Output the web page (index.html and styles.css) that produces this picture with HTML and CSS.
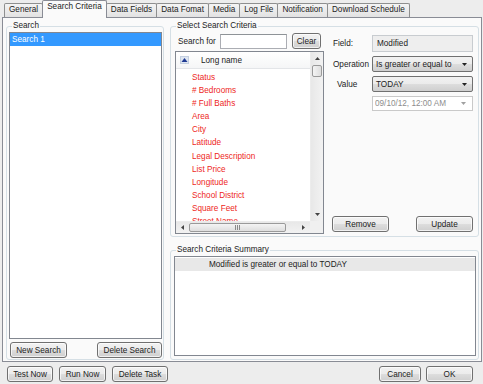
FILE: index.html
```html
<!DOCTYPE html>
<html>
<head>
<meta charset="utf-8">
<link rel="stylesheet" href="styles.css">
</head>
<body>
<div class="window">
  <div class="tabs">
    <div class="tab">General</div>
    <div class="tab active">Search Criteria</div>
    <div class="tab">Data Fields</div>
    <div class="tab">Data Fomat</div>
    <div class="tab">Media</div>
    <div class="tab">Log File</div>
    <div class="tab">Notification</div>
    <div class="tab">Download Schedule</div>
  </div>
  <div class="page">
    <fieldset class="group search-group">
      <legend class="lg-search">Search</legend>
      <div class="listbox">
        <div class="lb-item selected">Search 1</div>
      </div>
      <div class="btnrow">
        <button class="btn w-new">New Search</button>
        <button class="btn w-del">Delete Search</button>
      </div>
    </fieldset>
    <div class="rightcol">
      <fieldset class="group criteria">
        <legend class="lg-crit">Select Search Criteria</legend>
        <div class="crit-body">
          <div class="crit-left">
            <div class="searchrow">
              <span class="sr-label">Search for</span>
              <span class="textbox"></span>
              <button class="btn w-clear">Clear</button>
            </div>
            <div class="listview">
              <div class="lv-main">
                <div class="lv-header">
                  <span class="sort-icon"><svg width="9" height="8" viewBox="0 0 9 8"><rect x="0.5" y="0.5" width="8" height="7" fill="#dfe6f1" stroke="#c3cfe0"/><path d="M1.5 6 L4.5 2 L7.5 6 Z" fill="#1f3a93"/></svg></span>
                  <span class="lv-col">Long name</span>
                </div>
                <div class="lv-items">
                  <div class="lv-item">Status</div>
                  <div class="lv-item"># Bedrooms</div>
                  <div class="lv-item"># Full Baths</div>
                  <div class="lv-item">Area</div>
                  <div class="lv-item">City</div>
                  <div class="lv-item">Latitude</div>
                  <div class="lv-item">Legal Description</div>
                  <div class="lv-item">List Price</div>
                  <div class="lv-item">Longitude</div>
                  <div class="lv-item">School District</div>
                  <div class="lv-item">Square Feet</div>
                  <div class="lv-item">Street Name</div>
                </div>
              </div>
              <div class="vscroll">
                <div class="sb-btn"><svg width="5" height="3" viewBox="0 0 5 3"><path d="M0 3 L2.5 0 L5 3Z" fill="#444"/></svg></div>
                <div class="vthumb"></div>
                <div class="sb-fill"></div>
                <div class="sb-btn"><svg width="5" height="3" viewBox="0 0 5 3"><path d="M0 0 L2.5 3 L5 0Z" fill="#444"/></svg></div>
              </div>
              <div class="hscroll">
                <div class="sb-btn h"><svg width="3" height="5" viewBox="0 0 3 5"><path d="M3 0 L0 2.5 L3 5Z" fill="#444"/></svg></div>
                <div class="hthumb"><svg width="5" height="5" viewBox="0 0 5 5"><path d="M0.5 0V5M2.5 0V5M4.5 0V5" stroke="#8a8a8a" stroke-width="1"/></svg></div>
                <div class="sb-fill"></div>
                <div class="sb-btn h"><svg width="3" height="5" viewBox="0 0 3 5"><path d="M0 0 L3 2.5 L0 5Z" fill="#444"/></svg></div>
              </div>
              <div class="sb-corner"></div>
            </div>
          </div>
          <div class="crit-right">
            <div class="form">
              <span class="f-label">Field:</span>
              <span class="readonly">Modified</span>
              <span class="f-label">Operation</span>
              <span class="combo">Is greater or equal to<svg class="dd" width="5" height="3" viewBox="0 0 5 3"><path d="M0 0 L2.5 3 L5 0Z" fill="#222"/></svg></span>
              <span class="f-label ind">Value</span>
              <span class="combo">TODAY<svg class="dd" width="5" height="3" viewBox="0 0 5 3"><path d="M0 0 L2.5 3 L5 0Z" fill="#222"/></svg></span>
              <span></span>
              <span class="datebox"><span class="dtext">09/10/12, 12:00 AM</span><svg class="dd" width="5" height="3" viewBox="0 0 5 3"><path d="M0 0 L2.5 3 L5 0Z" fill="#a0a0a0"/></svg></span>
            </div>
            <div class="actions">
              <button class="btn w-act">Remove</button>
              <button class="btn w-act">Update</button>
            </div>
          </div>
        </div>
      </fieldset>
      <fieldset class="group summary">
        <legend class="lg-sum">Search Criteria Summary</legend>
        <div class="sumlist">
          <div class="sum-row">Modified is greater or equal to TODAY</div>
        </div>
      </fieldset>
    </div>
  </div>
  <div class="footer">
    <div class="f-left">
      <button class="btn w-test">Test Now</button>
      <button class="btn w-run">Run Now</button>
      <button class="btn w-deltask">Delete Task</button>
    </div>
    <div class="f-right">
      <button class="btn w-cancel">Cancel</button>
      <button class="btn w-ok">OK</button>
    </div>
  </div>
</div>
</body>
</html>
```

FILE: styles.css
```css
* { box-sizing: border-box; margin: 0; padding: 0; }
html, body { width: 483px; height: 384px; overflow: hidden; }
body {
  background: #ededed;
  font-family: "Liberation Sans", Arial, sans-serif;
  font-size: 8.2px;
  color: #222;
}
.window { display: flex; flex-direction: column; height: 384px; }

/* tabs */
.tabs {
  display: flex;
  align-items: flex-end;
  height: 17px;
  padding-left: 4px;
  position: relative;
  z-index: 2;
}
.tab {
  height: 14px;
  line-height: 12px;
  padding: 0 4px;
  border: 1px solid #8e8f8f;
  border-bottom: none;
  margin-left: -1px;
  background: linear-gradient(#f4f4f4, #e2e2e2);
  white-space: nowrap;
  border-radius: 2px 2px 0 0;
}
.tab:first-child { margin-left: 0; }
.tab.active {
  height: 18px;
  margin-bottom: -1px;
  line-height: 11px;
  padding: 0 4px 5px 4px;
  background: #fafafa;
  border-color: #898c95;
  position: relative;
  z-index: 3;
}

/* page */
.page {
  height: 345px;
  margin: 0 1px 0 2px;
  border: 1px solid #898c95;
  background: #fafafa;
  display: flex;
  gap: 6px;
  padding: 3px 2px 1px 3px;
}

.group {
  border: 1px solid #d5dfe5;
  border-radius: 3px;
  min-width: 0;
}
.group legend {
  line-height: 10px;
  padding: 0 1px;
}
.lg-search { margin-left: 3px; }
.lg-crit { margin-left: 1px; }
.lg-sum { margin-left: 2px; }

/* left search group */
.search-group {
  width: 158px;
  display: flex;
  flex-direction: column;
  padding: 1px 1px 1px 2px;
}
.listbox {
  flex: 1;
  background: #fff;
  border: 1px solid #828790;
}
.lb-item {
  height: 13px;
  line-height: 13px;
  padding-left: 2px;
}
.lb-item.selected { background: #3399ff; color: #fff; }
.btnrow {
  display: flex;
  justify-content: space-between;
  margin-top: 3px;
  padding-left: 1px;
}

.btn {
  font-family: inherit;
  font-size: 8.2px;
  color: #222;
  height: 16px;
  border: 1px solid #707070;
  border-radius: 3px;
  background: linear-gradient(#f2f2f2 0%, #ebebeb 50%, #dddddd 51%, #cfcfcf 100%);
  box-shadow: inset 0 0 0 1px rgba(255,255,255,0.7);
  text-align: center;
  line-height: 13px;
  white-space: nowrap;
}
.w-new { width: 57px; }
.w-del { width: 65px; }
.w-clear { width: 29px; }
.w-act { width: 57px; }
.w-test { width: 46px; }
.w-run { width: 47px; }
.w-deltask { width: 56px; }
.w-cancel { width: 42px; }
.w-ok { width: 47px; }

/* right column */
.rightcol {
  flex: 1;
  display: flex;
  flex-direction: column;
  gap: 8px;
}
.criteria {
  height: 216px;
  padding: 2px 5px 2px 4px;
}
.crit-body { display: flex; gap: 8px; height: 201px; }
.crit-left { width: 149px; display: flex; flex-direction: column; gap: 2px; }
.searchrow { display: flex; align-items: center; height: 16px; }
.sr-label { width: 45px; padding-left: 3px; }
.textbox {
  width: 67px;
  height: 15px;
  background: #fff;
  border: 1px solid #abadb3;
  border-top-color: #8e9397;
}
.searchrow .btn { margin-left: 5px; }

.listview {
  flex: 1;
  border: 1px solid #828790;
  background: #fff;
  display: grid;
  grid-template-columns: 1fr 13px;
  grid-template-rows: 1fr 12px;
  overflow: hidden;
}
.lv-main { overflow: hidden; }
.lv-header {
  height: 17px;
  display: flex;
  align-items: center;
  background: linear-gradient(#ffffff, #f5f6f7);
  border-bottom: 1px solid #e3e5e8;
}
.sort-icon { display: flex; margin-left: 4px; width: 10px; }
.lv-col { margin-left: 11px; }
.lv-items { padding-top: 2px; }
.lv-item {
  height: 13.1px;
  line-height: 13px;
  padding-left: 16px;
  color: #ee1f24;
  white-space: nowrap;
}
.vscroll {
  display: flex;
  flex-direction: column;
  background: linear-gradient(90deg, #e8e8e8, #f2f2f2);
  border-left: 1px solid #ececec;
}
.hscroll {
  display: flex;
  background: linear-gradient(#e8e8e8, #f2f2f2);
  border-top: 1px solid #ececec;
}
.sb-btn {
  height: 13px;
  display: flex;
  align-items: center;
  justify-content: center;
}
.sb-btn.h { width: 13px; height: auto; }
.sb-fill { flex: 1; }
.vthumb {
  height: 12px;
  margin: 0 1px;
  border: 1px solid #9a9a9a;
  border-radius: 2px;
  background: linear-gradient(90deg, #f4f4f4, #dedede);
}
.hthumb {
  width: 97px;
  margin: 1px 0 1px 0;
  border: 1px solid #9a9a9a;
  border-radius: 2px;
  background: linear-gradient(#f4f4f4, #dedede);
  display: flex;
  align-items: center;
  justify-content: center;
}
.sb-corner { background: #f0f0f0; }

.crit-right {
  flex: 1;
  display: flex;
  flex-direction: column;
  padding-top: 2px;
}
.form {
  display: grid;
  grid-template-columns: 40px 101px;
  grid-template-rows: 17px 16px 16px 15px;
  row-gap: 4px;
  align-items: center;
}
.f-label { padding-left: 1px; }
.f-label.ind { padding-left: 5px; }
.readonly {
  height: 17px;
  line-height: 15px;
  background: #eeeeee;
  border: 1px solid #c8ccd0;
  padding-left: 4px;
}
.combo {
  height: 16px;
  display: flex;
  align-items: center;
  justify-content: space-between;
  padding: 0 5px 0 3px;
  border: 1px solid #707070;
  border-radius: 2px;
  background: linear-gradient(#f2f2f2 0%, #ebebeb 50%, #dddddd 51%, #cfcfcf 100%);
  white-space: nowrap;
}
.datebox {
  height: 15px;
  display: flex;
  align-items: center;
  padding: 0 6px 0 2px;
  border: 1px solid #c9c9c9;
  background: #fff;
  color: #8d8d8d;
}
.dtext { width: 84px; overflow: hidden; white-space: nowrap; }
.datebox .dd { margin-left: auto; }
.actions {
  margin-top: auto;
  margin-bottom: 2px;
  display: flex;
  justify-content: space-between;
}

.summary {
  flex: 1;
  display: flex;
  flex-direction: column;
  padding: 1px 2px 3px 3px;
}
.sumlist {
  flex: 1;
  background: #fff;
  border: 1px solid #828790;
  padding-top: 1px;
}
.sum-row {
  height: 13px;
  line-height: 13px;
  background: #e8e8e8;
  padding-left: 34px;
}

/* footer */
.footer {
  flex: 1;
  display: flex;
  justify-content: space-between;
  padding: 4px 10px 0 7px;
}
.f-left, .f-right { display: flex; gap: 6px; height: 16px; }
.f-right { gap: 5px; }
```
